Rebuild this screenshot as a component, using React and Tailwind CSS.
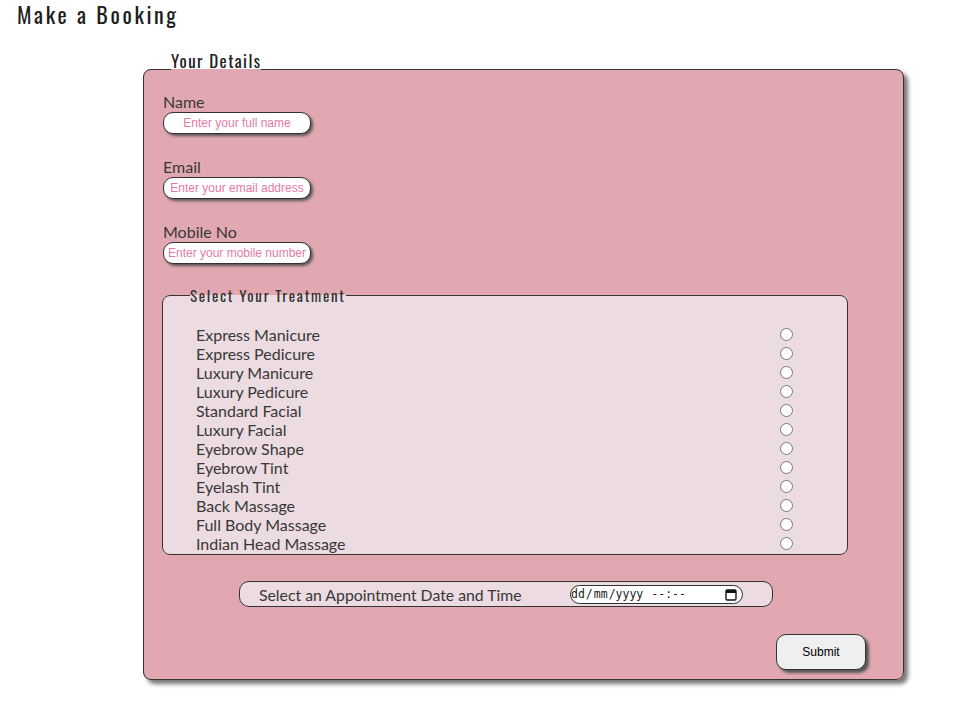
import React from "react";

const treatments = [
  "Express Manicure",
  "Express Pedicure",
  "Luxury Manicure",
  "Luxury Pedicure",
  "Standard Facial",
  "Luxury Facial",
  "Eyebrow Shape",
  "Eyebrow Tint",
  "Eyelash Tint",
  "Back Massage",
  "Full Body Massage",
  "Indian Head Massage",
];

const headFont =
  "font-['Oswald','Liberation_Sans_Narrow','DejaVu_Sans_Condensed','Roboto_Condensed',sans-serif]";

function TextInput({ placeholder }) {
  return (
    <input
      type="text"
      placeholder={placeholder}
      className="block mt-[1px] w-[148px] h-[22px] rounded-[10px] border border-[#333] bg-white shadow-[2px_2px_3px_#555] text-[12px] font-['Liberation_Sans',Arial,sans-serif] text-center text-[#333] placeholder:text-[#e67aa6] outline-none px-[2px]"
    />
  );
}

export default function App() {
  return (
    <div className="min-h-[716px] bg-white text-[#383838] font-['Lato',sans-serif]">
      <h1
        className={`${headFont} pl-[17px] text-[22px] leading-[28px] tracking-[2.6px] text-[#1e1e1e] font-normal`}
      >
        Make a Booking
      </h1>

      <fieldset className="ml-[143px] mt-[31px] w-[761px] rounded-[8px] border border-[#333] bg-[#e2a8b2] shadow-[4px_4px_4px_#777] px-[19px] pb-[9px]">
        <legend className={`${headFont} ml-[8px] text-[17px] leading-[20px] tracking-[1.4px] text-[#222] font-normal p-0`}>
          <span className="relative top-[-8px]">Your Details</span>
        </legend>

        <div className="pt-[13px]">
          <label className="block text-[16px] leading-[19px]">Name</label>
          <TextInput placeholder="Enter your full name" />
          <label className="block mt-[23px] text-[16px] leading-[19px]">Email</label>
          <TextInput placeholder="Enter your email address" />
          <label className="block mt-[23px] text-[16px] leading-[19px]">Mobile No</label>
          <TextInput placeholder="Enter your mobile number" />
        </div>

        <fieldset className="mt-[23px] -ml-[1px] w-[686px] rounded-[8px] border border-[#333] bg-[#ecdbe0]">
          <legend className={`${headFont} ml-[27px] text-[15px] leading-[16px] tracking-[1.7px] text-[#333] font-normal p-0`}>
            Select Your Treatment
          </legend>
          <div className="pt-[22px] pb-[1px] pl-[33px] pr-[54px]">
            {treatments.map((t) => (
              <div key={t} className="flex items-center h-[19px] text-[16px] leading-[19px]">
                <span>{t}</span>
                <input
                  type="radio"
                  name="treatment"
                  className="ml-auto m-0 w-[13px] h-[13px]"
                />
              </div>
            ))}
          </div>
        </fieldset>

        <div className="mt-[26px] ml-[76px] w-[534px] h-[26px] rounded-[10px] border border-[#333] bg-[#ecdbe0] flex items-center pl-[19px] pr-[29px]">
          <span className="text-[15.8px] leading-[19px]">Select an Appointment Date and Time</span>
          <div className="ml-auto w-[173px] h-[19px] rounded-full border border-[#333] bg-white flex items-center pl-[0px] pr-[5px] font-['DejaVu_Sans_Mono',monospace] text-[11.5px] leading-[14px] text-[#222]">
            <span>dd</span>
            <span className="ml-[1px]">/</span>
            <span className="ml-[1px]">mm</span>
            <span className="ml-[1px]">/</span>
            <span>yyyy</span>
            <span className="ml-[8px]">--</span>
            <span>:</span>
            <span>--</span>
            <svg className="ml-auto" width="12" height="13" viewBox="0 0 12 13">
              <rect x="1" y="2" width="10" height="10" rx="1.2" fill="none" stroke="#111" strokeWidth="1.4" />
              <rect x="1" y="2" width="10" height="3" fill="#111" />
            </svg>
          </div>
        </div>

        <div className="flex justify-end mt-[27px] pr-[18px]">
          <button className="w-[90px] h-[36px] rounded-[10px] border border-[#333] bg-[#efefef] shadow-[3px_3px_3px_#555] text-[12px] font-['Liberation_Sans',Arial,sans-serif] text-black">
            Submit
          </button>
        </div>
      </fieldset>
    </div>
  );
}
